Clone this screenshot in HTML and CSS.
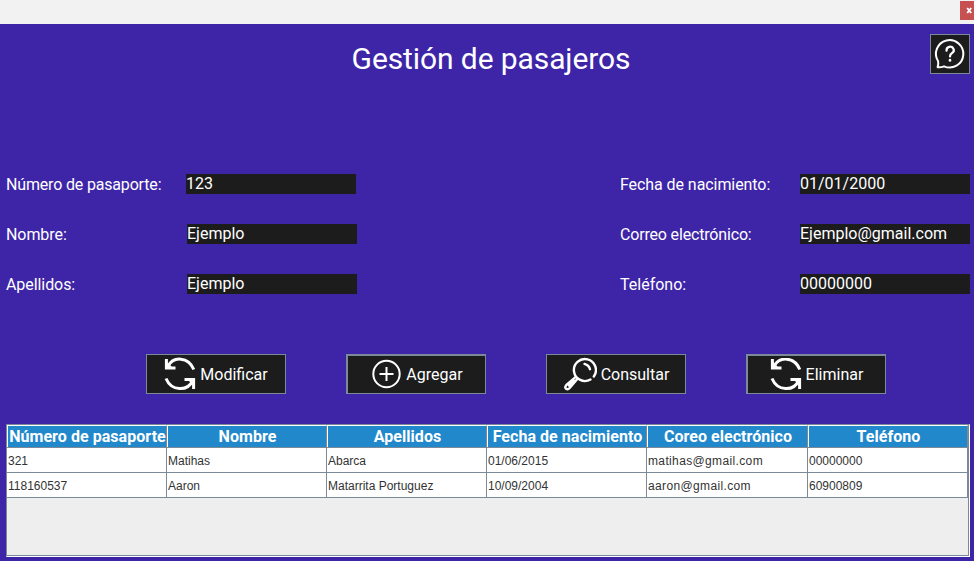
FILE: index.html
```
<!DOCTYPE html>
<html lang="es">
<head>
<meta charset="utf-8">
<title>Gestión de pasajeros</title>
<link rel="stylesheet" href="styles.css">
</head>
<body>
<header class="titlebar"><button class="close" aria-label="Cerrar"><svg width="7" height="7" viewBox="0 0 7 7"><path d="M1.200 1 5.200 6M5.200 1 1.200 6" stroke="#fff" stroke-width="1.900"/></svg></button></header>
<main class="window">
  <div class="heading">
    <h1>Gestión de pasajeros</h1>
    <button class="help" aria-label="Ayuda">
      <svg width="38" height="38" viewBox="0 0 38 38" fill="none" stroke="#fff" stroke-width="2" stroke-linecap="round" stroke-linejoin="round"><path d="M7.100 26.200A13.700 13.700 0 1 1 13 31.300Q10 32.600 6.600 32.200Q7.700 29.200 7.100 26.200Z"/><path d="M15.600 15.700A3.600 3.400 0 1 1 20.800 18.200Q19 19.200 19 21.400" stroke-width="2.200"/><path d="M19 25.200V25.400" stroke-width="2.700"/></svg>
    </button>
  </div>
  <form class="fields">
    <div class="group">
      <label class="tight">Número de pasaporte:</label><div class="input first">123</div>
      <label class="snug">Nombre:</label><div class="input">Ejemplo</div>
      <label class="snug">Apellidos:</label><div class="input">Ejemplo</div>
    </div>
    <div class="group right">
      <label class="snug">Fecha de nacimiento:</label><div class="input">01/01/2000</div>
      <label class="tight">Correo electrónico:</label><div class="input">Ejemplo@gmail.com</div>
      <label>Teléfono:</label><div class="input">00000000</div>
    </div>
  </form>
  <div class="actions">
    <button class="action"><svg width="32" height="34" viewBox="0 0 32 34" fill="none" stroke="#fff"><path d="M29.800 12.500C24.500 -.500 9 -1 4 9.500M2 21.500C7.500 34.500 23.500 34.500 28.500 24" stroke-width="3"/><path d="M2.400 2V11H11.500M20.500 22.500H29.600V32" stroke-width="3"/><path d="M3 10V5L8 10ZM29 23V28L24 23Z" fill="#fff" stroke="none"/></svg><span>Modificar</span></button>
    <button class="action thick"><svg width="32" height="32" viewBox="0 0 32 32" fill="none" stroke="#fff" stroke-width="2"><circle cx="16.500" cy="15" r="13.200"/><path d="M16.500 8V22M9.500 15H23.500"/></svg><span>Agregar</span></button>
    <button class="action"><svg width="34" height="34" viewBox="0 0 34 34" fill="none" stroke="#fff" stroke-width="2.400" stroke-linecap="round"><path d="M30.800 19.500A11 11 0 1 0 27.500 22.500"/><path d="M21.500 6.900Q26 8.300 27 12.200"/><path d="M12.500 20.200 3.200 28.200Q1.500 30.200 3 31.700Q4.800 33 6.700 31L14.500 21.800M10.500 23.500 6 28.500"/></svg><span>Consultar</span></button>
    <button class="action thick"><svg width="32" height="34" viewBox="0 0 32 34" fill="none" stroke="#fff"><path d="M29.800 11.500C24.500 -1.500 9 -2 4 8.500M2 20.500C7.500 33.500 23.500 33.500 28.500 23" stroke-width="3"/><path d="M2.400 1V10H11.500M20.500 21.500H29.600V31" stroke-width="3"/><path d="M3 9V4L8 9ZM29 22V27L24 22Z" fill="#fff" stroke="none"/></svg><span>Eliminar</span></button>
  </div>
  <div class="table-pane">
    <div class="row head"><span>Número de pasaporte</span><span>Nombre</span><span>Apellidos</span><span>Fecha de nacimiento</span><span>Coreo electrónico</span><span>Teléfono</span></div>
    <div class="row"><span>321</span><span>Matihas</span><span>Abarca</span><span>01/06/2015</span><span class="email">matihas@gmail.com</span><span>00000000</span></div>
    <div class="row"><span>118160537</span><span>Aaron</span><span>Matarrita Portuguez</span><span>10/09/2004</span><span class="email">aaron@gmail.com</span><span>60900809</span></div>
  </div>
</main>
</body>
</html>
```
FILE: styles.css
```
* { box-sizing: border-box; }
body { margin: 0; width: 974px; height: 561px; overflow: hidden; font: 16px/20px Roboto, sans-serif; color: #fff; background: #3e25a8; }
button { font: inherit; color: inherit; padding: 0; margin: 0; border-radius: 0; }
svg { display: block; flex: none; }
.titlebar { height: 24px; background: #f2f2f2; display: flex; justify-content: flex-end; padding-top: 1px; }
.close { width: 14px; height: 19px; border: 0; background: #c75050; display: flex; align-items: center; justify-content: flex-end; padding-right: 1px; }
.window { height: 537px; padding: 10px 4px 4px 6px; }
.heading { height: 140px; display: grid; grid-template-columns: 40px 1fr 40px; align-items: start; }
h1 { grid-column: 2; margin: 7px 0 0; text-align: center; font-size: 30px; line-height: 36px; font-weight: 400; padding-left: 6px; letter-spacing: -.1px; }
.help { width: 40px; height: 40px; background: #1c1c1c; border: 1px solid #7a8a99; }
.fields { display: flex; justify-content: space-between; height: 180px; }
.group { display: grid; grid-template-columns: 181px 170px; grid-auto-rows: 20px; row-gap: 30px; white-space: nowrap; }
.group.right { grid-template-columns: 180px 170px; }
label { line-height: 21px; }
.tight { letter-spacing: -.17px; }
.snug { letter-spacing: -.07px; }
.input { background: #1c1c1c; height: 20px; line-height: 19px; }
.input.first { margin: 0 1px 0 -1px; width: 170px; }
.actions { display: flex; gap: 60px; margin-left: 140px; height: 70px; }
.action { width: 140px; height: 40px; border: 1px solid #7a8a99; background: #1c1c1c; display: flex; align-items: center; justify-content: center; gap: 4px; }
.action span { padding-top: 1px; }
.action.thick { border-width: 2px 1px 1px 2px; }
.action.thick span { padding-top: 0; }
.table-pane { width: 964px; height: 133px; background: #eee; border: 1px solid #7a8a99; box-shadow: inset -1px -1px #7a8a99; border-right-color: #fff; border-bottom-color: #fff; }
.row { display: grid; grid-template-columns: repeat(4, 160px) 161px 160px; height: 25px; color: #333; font: 12px/26px "Liberation Sans", sans-serif; white-space: nowrap; }
.row span { background: #fff; border-right: 1px solid #7a8a99; border-bottom: 1px solid #7a8a99; padding-left: 1px; overflow: hidden; }
.row .email { letter-spacing: .36px; }
.row.head { height: 23px; color: #fff; font: bold 16px/21px Roboto, sans-serif; text-align: center; }
.row.head span { background: #2288cc; border-top: 1px solid #fff; box-shadow: inset 1px 0 #fff; padding: 0 0 0 2px; letter-spacing: .05px; }
```
